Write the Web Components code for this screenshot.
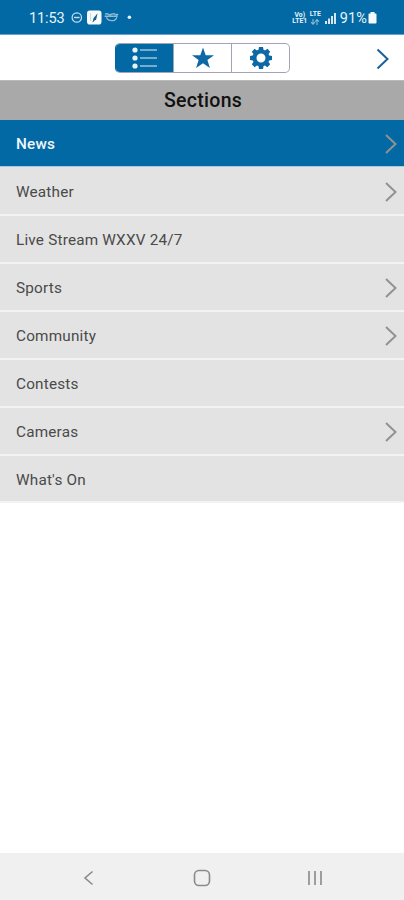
<!DOCTYPE html>
<html lang="en">
<head>
<meta charset="utf-8">
<title>Sections</title>
<style>
html, body { margin: 0; height: 100%; }
body { font-family: Roboto, "Liberation Sans", sans-serif; background: #fff; overflow: hidden; }
</style>
</head>
<body>
<phone-screen></phone-screen>
<script>
const define = (name, markup, setup) => customElements.define(name, class extends HTMLElement {
  constructor() {
    super();
    this.attachShadow({ mode: "open" }).innerHTML = markup;
  }
  connectedCallback() { if (setup) setup(this, this.shadowRoot); }
});

define("status-bar", `
<style>
:host { display: flex; box-sizing: border-box; height: 35px; padding: 2px 27px 0 29px; align-items: center; background: #0369a4; border-bottom: 1px solid #6f9fcf; color: #e9f3fa; font-size: 14.5px; line-height: 17px; }
svg { display: block; flex: none; }
.time { width: 42px; letter-spacing: -.1px; }
.gap { flex: 1; }
.net { font-size: 6.8px; line-height: 6.5px; font-weight: 700; text-align: center; }
.volte { width: 16px; }
.lte { width: 13px; margin-left: 1px; }
.net svg { margin: 1px auto 0; }
.signal { margin: 0 4px 0 3px; }
.pct { letter-spacing: .1px; margin-right: 1px; }
</style>
<span class="time">11:53</span>
<svg width="80" height="18" viewBox="0 0 80 18" fill="none">
  <circle cx="5.8" cy="8.5" r="4.7" stroke="#c9dfed" stroke-width="1.2"/><path d="M3 8.5h5.6" stroke="#c9dfed" stroke-width="1.4"/>
  <rect x="16" y="1.6" width="14.5" height="14" rx="2.8" fill="#f7fbfd"/>
  <path d="M26.6 4.2 22.6 9l-1.2 4.4 3.8-3.2Z" fill="#225d84"/><path d="M19.5 4v8" stroke="#c5d9e5"/>
  <path d="M34 5.2q2-1 3.4 0t3.400 0 3.400 0 3 0M33.600 7.300h13" stroke="#8ebad6" stroke-width="1.4"/>
  <path d="M35.500 8.2q.8 3.500 5.200 3.500 4 0 5.200-3.500" stroke="#8ebad6" stroke-width="1.2"/>
  <circle cx="58.4" cy="8.2" r="1.8" fill="#e6f1f8"/>
</svg>
<span class="gap"></span>
<div class="net volte">Vo)<br>LTE1</div>
<div class="net lte">LTE<svg width="10" height="6" viewBox="0 0 10 6" fill="none" stroke="#8ebad6" stroke-width="1.1"><path d="M3 0v5M1 3.2l2 2 2-2M7 6V1M5 2.6l2-2 2 2"/></svg></div>
<svg class="signal" width="11" height="14" viewBox="0 0 11 14"><path d="M0 10h2v3H0zM3 7.5h2V13H3z" fill="#d5e6f1"/><path d="M6 5h2v8H6zM9 2h2v11H9z" fill="#d5e6f1"/></svg>
<span class="pct">91%</span>
<svg width="9" height="14" viewBox="0 0 9 14"><path d="M2.5 1h4v1.5h1.2q.8 0 .8.8v8.4q0 .8-.8.8H1.3q-.8 0-.8-.8V3.300q0-.8.8-.8h1.200z" fill="#f4f9fc"/></svg>
`);

define("segment-button", `
<style>
:host { display: flex; flex: 1; align-items: center; justify-content: center; color: #0d68a5; border-left: 1px solid #a3a3b5; }
:host([selected]) { background: #0369a4; color: #fff; border-left-color: #0369a4; }
</style><slot></slot>`);

define("tool-bar", `
<style>
:host { display: grid; grid-template-columns: 115px 175px 1fr; box-sizing: border-box; height: 45px; align-items: center; background: #fff; }
.group { grid-column: 2; display: flex; height: 30px; box-sizing: border-box; border: 1px solid #a3a3b5; border-left-color: #0369a4; border-radius: 5px; overflow: hidden; background: #fff; }
segment-button:first-child { margin: -1px 0 -1px -1px; }
svg { display: block; }
.next { justify-self: end; margin: 3px 14px 0 0; }
</style>
<div class="group">
  <segment-button selected><svg width="26" height="22" viewBox="0 0 26 22"><g fill="#e8f3f8"><circle cx="3" cy="3" r="2.6"/><circle cx="3" cy="11" r="2.600"/><circle cx="3" cy="19" r="2.600"/></g><path d="M8 3h17M8 11h17M8 19h17" stroke="#9dc3dc" stroke-width="1.5"/></svg></segment-button>
  <segment-button><svg width="24" height="22" viewBox="0 0 24 22"><path d="M12 .5 14.700 8.200H23L16.400 13.100 18.900 21 12 16.200 5.100 21 7.600 13.100 1 8.200H9.300Z" fill="currentColor"/></svg></segment-button>
  <segment-button><svg class="gear" width="24" height="24" viewBox="-12 -12 24 24"><g fill="currentColor"></g><circle r="6.500" fill="none" stroke="currentColor" stroke-width="4"/></svg></segment-button>
</div>
<svg class="next" width="14" height="22" viewBox="0 0 14 22"><path d="M1.500 1.500 11.500 11 1.500 20.500" fill="none" stroke="#17619c" stroke-width="2"/></svg>
`, (el, root) => {
  const teeth = root.querySelector(".gear g");
  teeth.innerHTML = Array.from({ length: 8 }, (_, i) => `<path d="M-2.700-7 -2-11H2L2.700-7Z" transform="rotate(${i * 45})"/>`).join("");
});

define("section-title", `
<style>
:host { display: flex; box-sizing: border-box; height: 40px; align-items: center; justify-content: center; background: #a9a9a9; border-top: 1px solid #b9b9b9; color: #111; font-size: 19.5px; font-weight: 500; letter-spacing: .3px; padding-left: 2px; }
</style><slot></slot>`);

define("section-row", `
<style>
:host { display: flex; box-sizing: border-box; height: 48px; align-items: center; justify-content: space-between; padding: 2px 6px 0 16px; background: #e3e3e3; border-bottom: 2px solid #f3f3f3; color: #4a4a4a; font-size: 15.3px; letter-spacing: .2px; }
:host([selected]) { height: 47px; border-bottom: 1px solid #a9c9df; background: #0369a4; color: #f0f7fb; font-weight: 500; }
svg { display: none; }
:host([more]) svg { display: block; }
</style>
<span><slot></slot></span>
<svg width="14" height="22" viewBox="0 0 14 22"><path d="M2 2 11.500 11 2 20" fill="none" stroke="#929292" stroke-width="2"/></svg>`);

define("system-nav", `
<style>
:host { display: flex; height: 47px; padding: 0 33px; align-items: center; background: #f0f0f0; }
div { flex: 1; display: flex; justify-content: center; padding-top: 3px; }
svg { fill: none; stroke: #8a8a8a; stroke-width: 1.600; }
</style>
<div><svg width="20" height="20" viewBox="0 0 20 20"><path d="M13.500 3.500 6 10l7.500 6.500"/></svg></div>
<div><svg width="20" height="20" viewBox="0 0 20 20"><rect x="2.500" y="2.500" width="15" height="15" rx="4.500"/></svg></div>
<div><svg width="20" height="20" viewBox="0 0 20 20"><path d="M4 3v14M10 3v14M16 3v14"/></svg></div>`);

define("phone-screen", `
<style>
:host { display: flex; flex-direction: column; height: 900px; }
main { flex: 1; background: #fff; }
section-row:nth-child(2) { height: 49px; }
section-row:last-child { height: 47px; }
</style>
<status-bar></status-bar>
<tool-bar></tool-bar>
<section-title>Sections</section-title>
<main>
  <section-row selected more>News</section-row>
  <section-row more>Weather</section-row>
  <section-row>Live Stream WXXV 24/7</section-row>
  <section-row more>Sports</section-row>
  <section-row more>Community</section-row>
  <section-row>Contests</section-row>
  <section-row more>Cameras</section-row>
  <section-row>What's On</section-row>
</main>
<system-nav></system-nav>`);
</script>
</body>
</html>
